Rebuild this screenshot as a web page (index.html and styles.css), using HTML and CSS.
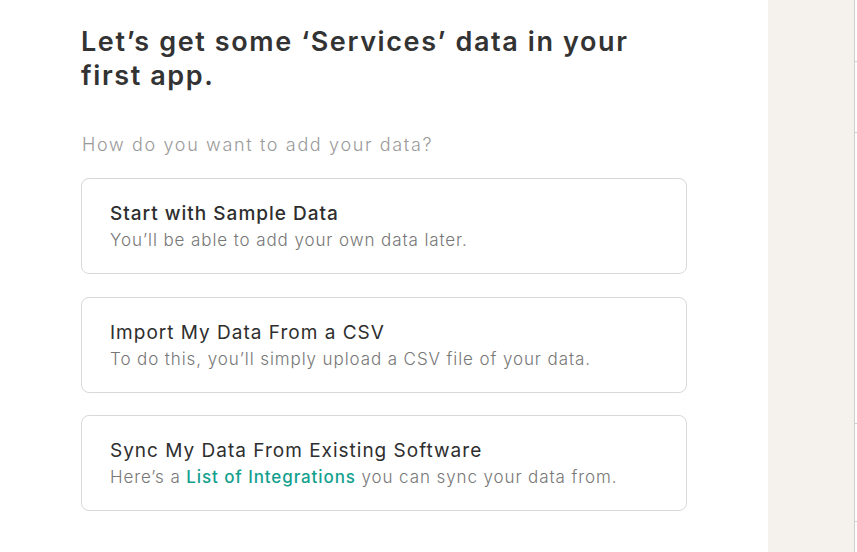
FILE: index.html
```html
<!DOCTYPE html>
<html lang="en">
<head>
<meta charset="utf-8">
<title>Add data</title>
<link rel="stylesheet" href="styles.css">
</head>
<body>
<div class="page">
  <main class="main">
    <h1 class="title">Let’s get some ‘Services’ data in your first app.</h1>
    <p class="question">How do you want to add your data?</p>
    <div class="options">
      <div class="card">
        <div class="card-title strong">Start with Sample Data</div>
        <div class="card-sub">You’ll be able to add your own data later.</div>
      </div>
      <div class="card">
        <div class="card-title">Import My Data From a CSV</div>
        <div class="card-sub">To do this, you’ll simply upload a CSV file of your data.</div>
      </div>
      <div class="card">
        <div class="card-title">Sync My Data From Existing Software</div>
        <div class="card-sub">Here’s a <a class="link" href="#">List of Integrations</a> you can sync your data from.</div>
      </div>
    </div>
  </main>
  <aside class="side"></aside>
  <div class="edge">
    <span class="tick t1"></span>
    <span class="tick t2"></span>
    <span class="tick t3"></span>
    <span class="tick t4"></span>
  </div>
</div>
</body>
</html>
```
FILE: styles.css
```css
html, body {
  margin: 0;
  padding: 0;
  background: #fff;
}
body {
  font-family: Inter, "Noto Sans", sans-serif;
  color: #333;
}
.page {
  display: flex;
  width: 857px;
  height: 552px;
  overflow: hidden;
}
.main {
  width: 768px;
  flex: none;
  padding: 25px 0 0 81px;
  box-sizing: border-box;
}
.title {
  margin: 0;
  width: 580px;
  font-size: 27px;
  line-height: 34px;
  font-weight: 600;
  color: #333;
  letter-spacing: 1.6px;
}
.question {
  margin: 40px 0 0 1px;
  font-size: 18px;
  line-height: 24px;
  font-weight: 300;
  color: #9a9a9a;
  letter-spacing: 1.65px;
}
.options {
  margin-top: 21px;
  display: flex;
  flex-direction: column;
  gap: 22.5px;
  width: 606px;
}
.card {
  height: 96px;
  box-sizing: border-box;
  border: 1px solid #d8d8d8;
  border-radius: 8px;
  padding: 23px 28px 0;
}
.card-title {
  font-size: 19px;
  line-height: 24px;
  font-weight: 400;
  color: #2e2e2e;
  letter-spacing: 1px;
}
.card-title.strong {
  font-weight: 500;
}
.card-sub {
  margin-top: 3px;
  font-size: 17px;
  line-height: 22px;
  font-weight: 300;
  color: #777;
  letter-spacing: 0.9px;
}
.link {
  color: #14a08e;
  font-weight: 500;
  text-decoration: none;
}
.side {
  width: 86px;
  flex: none;
  background: #f5f2ee;
}
.edge {
  position: relative;
  width: 3px;
  flex: none;
  border-left: 1px solid #cfcfcf;
  box-sizing: border-box;
}
.tick {
  position: absolute;
  left: 0;
  width: 2px;
  height: 1px;
  background: #d0d0d0;
}
.t1 { top: 61px; }
.t2 { top: 132px; }
.t3 { top: 423px; }
.t4 { top: 521px; }
```
